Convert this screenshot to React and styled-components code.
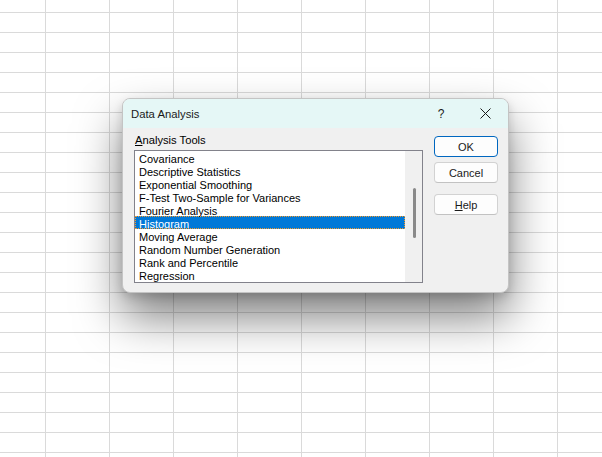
import React from "react"
import styled, { createGlobalStyle } from "styled-components"

const GlobalStyle = createGlobalStyle`
  html, body {
    margin: 0;
    padding: 0;
    background: #ffffff;
  }
  body {
    font-family: "Liberation Sans", Arial, sans-serif;
  }
`

const tools = [
  "Covariance",
  "Descriptive Statistics",
  "Exponential Smoothing",
  "F-Test Two-Sample for Variances",
  "Fourier Analysis",
  "Histogram",
  "Moving Average",
  "Random Number Generation",
  "Rank and Percentile",
  "Regression",
]

const Sheet = styled.div`
  width: 602px;
  height: 457px;
  box-sizing: border-box;
  padding: 98px 0 0 122px;
  overflow: hidden;
  background-color: #ffffff;
  background-image: linear-gradient(to right, #dadada 1px, transparent 1px),
    linear-gradient(to bottom, #dadada 1px, transparent 1px);
  background-size: 64px 20px;
  background-position: 45px 12px;
`

const Dialog = styled.div`
  width: 387px;
  height: 195px;
  box-sizing: border-box;
  border: 1px solid #c4c4c4;
  border-radius: 8px;
  background: #f0f0f0;
  overflow: hidden;
  box-shadow: 0 24px 46px rgba(0, 0, 0, 0.5), 0 4px 10px rgba(0, 0, 0, 0.14);
  display: flex;
  flex-direction: column;
`

const TitleBar = styled.div`
  height: 29px;
  flex: none;
  background: #e5f7f6;
  display: flex;
  align-items: center;
  padding-left: 8px;
`

const Title = styled.div`
  flex: 1;
  font-size: 11.3px;
  color: #1a1a1a;
  padding-top: 1px;
`

const TitleButton = styled.div`
  width: ${(p) => p.w}px;
  height: 29px;
  display: flex;
  align-items: center;
  justify-content: center;
  font-size: 12px;
  color: #1a1a1a;
`

const Body = styled.div`
  flex: 1;
  display: flex;
  padding: 3px 0 0 11px;
  gap: 11px;
`

const ToolsColumn = styled.div`
  display: flex;
  flex-direction: column;
`

const Label = styled.div`
  font-size: 11.2px;
  line-height: 14px;
  height: 14px;
  padding-top: 2px;
  box-sizing: border-box;
  color: #000;
  margin-bottom: 5px;
  padding-left: 1px;
`

const Mnemonic = styled.span`
  text-decoration: underline;
  text-underline-offset: 1px;
`

const ListBox = styled.div`
  width: 289px;
  height: 133px;
  box-sizing: border-box;
  border: 1px solid #82828b;
  display: flex;
  background: #ffffff;
`

const Items = styled.div`
  flex: 1;
  overflow: hidden;
`

const Item = styled.div`
  height: 13px;
  line-height: 17px;
  font-size: 11px;
  padding-left: 4px;
  white-space: nowrap;
  color: ${(p) => (p.selected ? "#ffffff" : "#000000")};
  background: ${(p) => (p.selected ? "#0078d7" : "transparent")};
  outline: ${(p) => (p.selected ? "1px dotted #f39a2c" : "none")};
  outline-offset: -1px;
`

const ScrollTrack = styled.div`
  width: 17px;
  background: #f0f0f0;
  display: flex;
  justify-content: center;
  padding-top: 37px;
  box-sizing: border-box;
`

const Thumb = styled.div`
  width: 3px;
  height: 50px;
  border-radius: 2px;
  background: #8a8a8a;
  margin-left: 1px;
`

const ButtonColumn = styled.div`
  display: flex;
  flex-direction: column;
  padding-top: 5px;
`

const Button = styled.div`
  width: 64px;
  height: 21px;
  box-sizing: border-box;
  margin-bottom: ${(p) => p.gap || 5}px;
  border: 1px solid ${(p) => (p.primary ? "#0067c0" : "#d2d2d2")};
  border-bottom-color: ${(p) => (p.primary ? "#0067c0" : "#c2c2c2")};
  border-radius: 4px;
  background: #fdfdfd;
  display: flex;
  align-items: center;
  justify-content: center;
  font-size: 11px;
  color: #1a1a1a;
`

function CloseIcon() {
  return (
    <svg width="11" height="11" viewBox="0 0 11 11">
      <path d="M0.5 0.5 L10.5 10.5 M10.5 0.5 L0.5 10.5" stroke="#1a1a1a" strokeWidth="1" />
    </svg>
  )
}

export default function App() {
  return (
    <Sheet>
      <GlobalStyle />
      <Dialog>
        <TitleBar>
          <Title>Data Analysis</Title>
          <TitleButton w={42}>?</TitleButton>
          <TitleButton w={46}>
            <CloseIcon />
          </TitleButton>
        </TitleBar>
        <Body>
          <ToolsColumn>
            <Label>
              <Mnemonic>A</Mnemonic>nalysis Tools
            </Label>
            <ListBox>
              <Items>
                {tools.map((t) => (
                  <Item key={t} selected={t === "Histogram"}>
                    {t}
                  </Item>
                ))}
              </Items>
              <ScrollTrack>
                <Thumb />
              </ScrollTrack>
            </ListBox>
          </ToolsColumn>
          <ButtonColumn>
            <Button primary>OK</Button>
            <Button gap={11}>Cancel</Button>
            <Button>
              <span>
                <Mnemonic>H</Mnemonic>elp
              </span>
            </Button>
          </ButtonColumn>
        </Body>
      </Dialog>
    </Sheet>
  )
}
